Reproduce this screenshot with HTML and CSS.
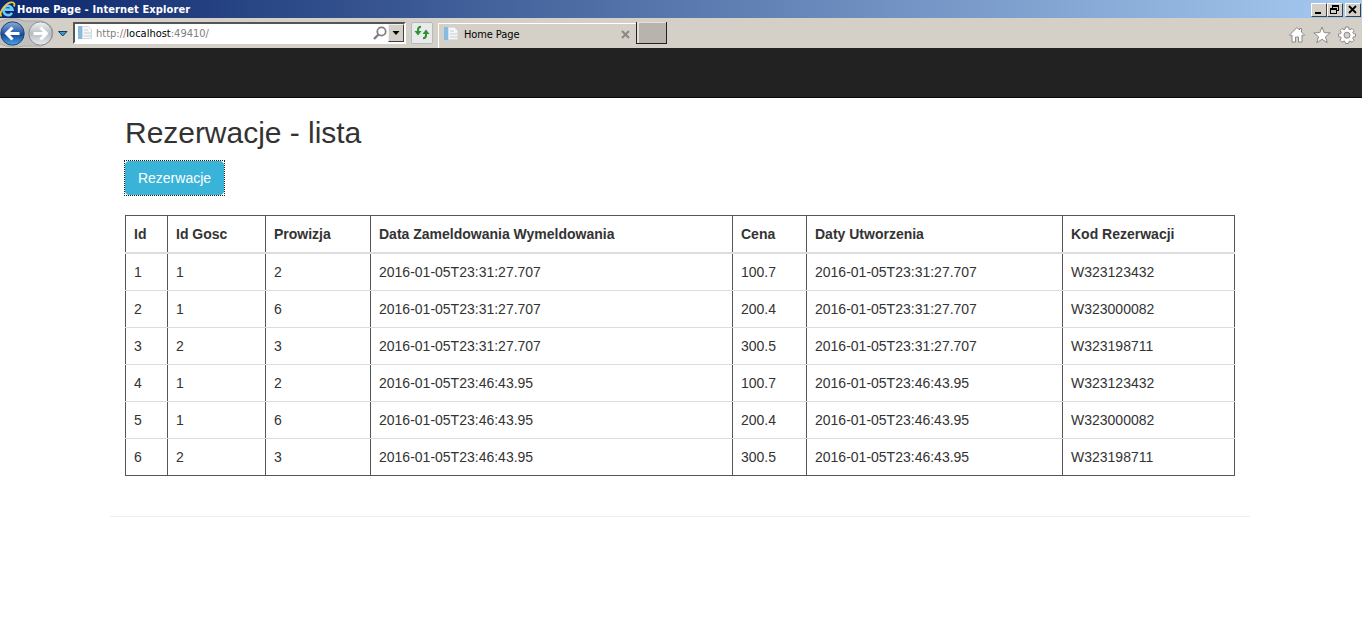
FILE: index.html
```html
<!DOCTYPE html>
<html lang="pl">
<head>
<meta charset="utf-8">
<title>Home Page</title>
<link rel="stylesheet" href="styles.css">
</head>
<body>
<header class="titlebar">
  <svg class="ie" width="16" height="17" viewBox="0 0 16 17"><path d="M12 11.800A4.600 4.600 0 1 1 12.500 8.600H4.500" fill="none" stroke="#6ccbf8" stroke-width="2.600"/><path d="M1.500 15.500C-2 11 7 0 13 1.500c2 .7 1.700 2.300.8 4" fill="none" stroke="#f7ca35" stroke-width="1.700"/></svg>
  <span class="title">Home Page - Internet Explorer</span>
  <div class="controls">
    <span class="control"><svg width="14" height="12"><path d="M3 9h6" stroke="#000" stroke-width="2"/></svg></span>
    <span class="control"><svg width="14" height="12" shape-rendering="crispEdges"><path d="M4 1h7v2H4zM10 3h1v4H9V6h1zM4 3h1v1H4zM2 4h7v2H2zM2 6h1v4H2zM8 6h1v4H8zM3 9h5v1H3z"/></svg></span>
    <span class="control close"><svg width="14" height="12"><path d="M3 2l7 7M10 2L3 9" stroke="#000" stroke-width="1.800"/></svg></span>
  </div>
</header>
<div class="toolbar">
  <svg class="nav" width="72" height="30" viewBox="0 0 72 30">
    <defs>
      <linearGradient id="blue" x2="0" y2="1"><stop stop-color="#8aabd8"/><stop offset=".45" stop-color="#2c60ae"/><stop offset=".55" stop-color="#164a9c"/><stop offset="1" stop-color="#4ba7ea"/></linearGradient>
      <linearGradient id="gray" x2="0" y2="1"><stop stop-color="#f2f3f5"/><stop offset=".5" stop-color="#b9bdc2"/><stop offset="1" stop-color="#e9ecef"/></linearGradient>
    </defs>
    <path d="M0 3.500Q12-2 24 3h17q12 3 12 12t-12 13H24Q12 31 0 26" fill="#c2c0bd" stroke="#aaa7a3"/>
    <circle cx="12.500" cy="15.500" r="11.700" fill="url(#blue)" stroke="#24446f"/>
    <circle cx="40.500" cy="15.500" r="11.700" fill="url(#gray)" stroke="#8b9097"/>
    <path d="M19.500 15.500H7M12.500 9.500l-6 6 6 6" fill="none" stroke="#fff" stroke-width="3"/>
    <path d="M33.500 15.500H46M40.500 9.500l6 6-6 6" fill="none" stroke="#fff" stroke-width="3"/>
    <path d="M58.500 13.500h8.500l-4.250 4.500z" fill="#36a0cf" stroke="#123e62"/>
  </svg>
  <div class="address">
    <svg class="page" width="16" height="16"><path d="M1 1h4v13H1z" fill="#84bbdf"/><path d="M5.500 1.500h6l3 3v9h-9z" fill="#f6f7f8" stroke="#d4d9df"/><path d="M7 5h4M7 8h7M7 11h7" stroke="#c4ccd5"/></svg>
    <span class="url">http://<b>localhost</b>:49410/</span>
    <svg class="search" width="14" height="16"><circle cx="8.500" cy="6.500" r="4.200" fill="none" stroke="#808080" stroke-width="1.800"/><path d="M5.500 9.500L1 14" stroke="#808080" stroke-width="2.400"/></svg>
    <span class="drop"><svg width="14" height="16"><path d="M3.500 6h7L7 10z"/></svg></span>
  </div>
  <span class="refresh"><svg width="20" height="20"><path d="M9 3.800Q6 4 6 7v2M11 15.200q3 0 3-3V10" fill="none" stroke="#2d9230" stroke-width="2"/><path d="M2.500 8h7L6 12.500zM10.500 11h7L14 6.500z" fill="#2d9230"/></svg></span>
  <div class="tab">
    <svg class="page" width="16" height="16"><path d="M1 1h4v13H1z" fill="#84bbdf"/><path d="M5.500 1.500h6l3 3v9h-9z" fill="#f6f7f8" stroke="#d9dee3"/><path d="M7 5h4M7 8h7M7 11h7" stroke="#c4ccd5"/></svg>
    <span class="tab-name">Home Page</span>
    <svg class="tab-close" width="9" height="9"><path d="M1 1l7 7M8 1L1 8" stroke="#8b8985" stroke-width="2"/></svg>
  </div>
  <span class="newtab"></span>
  <div class="tools">
    <svg width="18" height="18"><path d="M1.500 9L9 1.500 11.500 4V2.500h2V6l3 3-1 1-1.500-1v7h-3.500v-5h-3v5H4V9l-1.500 1z" fill="#fff" stroke="#8c8a87"/></svg>
    <svg width="18" height="18"><path d="M9 1l2.200 5.600 6 .3-4.700 3.800 1.700 6L9 13.300l-5.200 3.400 1.700-6L.8 6.900l6-.3z" fill="#fff" stroke="#8c8a87"/></svg>
    <svg width="18" height="18"><path d="M7.500 1h3l.5 2.200 1 .5 2-1.200 2 2-1.200 2 .5 1 2.200.5v2.500l-2.200.5-.5 1.200 1.200 2-2 2-2-1.200-1 .5-.5 2h-3l-.5-2-1-.5-2 1.200-2-2 1.200-2-.5-1.200L.5 10.500V8l2.200-.5.5-1-1.200-2 2-2 2 1.200 1-.5z" fill="#fff" stroke="#8c8a87"/><circle cx="9" cy="9.200" r="3" fill="#d4d0c8" stroke="#8c8a87"/></svg>
  </div>
</div>
<nav class="navbar"></nav>
<main class="content">
  <h2>Rezerwacje - lista</h2>
  <button class="btn">Rezerwacje</button>
  <table class="table">
    <colgroup><col class="c1"><col class="c2"><col class="c3"><col class="c4"><col class="c5"><col class="c6"><col class="c7"></colgroup>
    <thead><tr><th>Id</th><th>Id Gosc</th><th>Prowizja</th><th>Data Zameldowania Wymeldowania</th><th>Cena</th><th>Daty Utworzenia</th><th>Kod Rezerwacji</th></tr></thead>
    <tbody>
      <tr><td>1</td><td>1</td><td>2</td><td>2016-01-05T23:31:27.707</td><td>100.7</td><td>2016-01-05T23:31:27.707</td><td>W323123432</td></tr>
      <tr><td>2</td><td>1</td><td>6</td><td>2016-01-05T23:31:27.707</td><td>200.4</td><td>2016-01-05T23:31:27.707</td><td>W323000082</td></tr>
      <tr><td>3</td><td>2</td><td>3</td><td>2016-01-05T23:31:27.707</td><td>300.5</td><td>2016-01-05T23:31:27.707</td><td>W323198711</td></tr>
      <tr><td>4</td><td>1</td><td>2</td><td>2016-01-05T23:46:43.95</td><td>100.7</td><td>2016-01-05T23:46:43.95</td><td>W323123432</td></tr>
      <tr><td>5</td><td>1</td><td>6</td><td>2016-01-05T23:46:43.95</td><td>200.4</td><td>2016-01-05T23:46:43.95</td><td>W323000082</td></tr>
      <tr><td>6</td><td>2</td><td>3</td><td>2016-01-05T23:46:43.95</td><td>300.5</td><td>2016-01-05T23:46:43.95</td><td>W323198711</td></tr>
    </tbody>
  </table>
</main>
<hr class="rule">
</body>
</html>
```

FILE: styles.css
```css
* { box-sizing: border-box; }
body { margin: 0; background: #fff; color: #333; font: 14px/20px "Liberation Sans", Arial, sans-serif; overflow: hidden; }
svg { display: block; flex: none; }
.titlebar { height: 18px; display: flex; align-items: center; background: linear-gradient(90deg, #0c276c, #a6caf0); color: #fff; }
.title { margin-left: 1px; font: bold 11px/17px "DejaVu Sans Condensed", "DejaVu Sans", sans-serif; font-stretch: condensed; letter-spacing: .12px; white-space: nowrap; }
.controls { margin-left: auto; display: flex; padding: 1px 1px 0 0; }
.control { width: 16px; height: 14px; background: #d4d0c8; border: 1px solid; border-color: #fff #404040 #404040 #fff; }
.close { margin-left: 2px; }
.toolbar { height: 30px; background: #d4d0c8; display: flex; align-items: flex-start; font: 11px/18px "DejaVu Sans Condensed", "DejaVu Sans", sans-serif; font-stretch: condensed; }
.address { width: 333px; height: 22px; margin: 4px 0 0 1px; background: #fff; display: flex; align-items: center; border: 2px solid; border-color: #555 #fff #fff #555; }
.page { margin-left: 2px; }
.url { margin-left: 3px; padding-top: 2px; color: #808080; }
.url b { font-weight: normal; color: #000; }
.search { margin-left: auto; }
.drop { width: 16px; height: 18px; margin-left: 1px; background: #d4d0c8; border: 1px solid; border-color: #eee #404040 #404040 #eee; }
.refresh { width: 22px; height: 22px; margin: 4px 0 0 5px; background: #e9eaec; border: 1px solid #b4b8bf; border-radius: 2px; }
.tab { width: 198px; height: 25px; margin: 5px 0 0 5px; display: flex; align-items: center; padding-bottom: 4px; border-top: 1px solid #fff; border-left: 1px solid #fff; color: #000; }
.tab .page { margin-left: 4px; }
.tab-name { margin-left: 5px; padding-top: 1px; letter-spacing: -.1px; }
.tab-close { margin: 1px 6px 0 auto; }
.newtab { width: 31px; height: 22px; margin-top: 4px; background: #b8b4ad; border: solid #222; border-width: 0 1px 1px 1px; box-shadow: inset 2px 1px #e4e1db; }
.tools { display: flex; gap: 7px; margin: 8px 6px 0 auto; }
.navbar { height: 50px; background: #222; border-bottom: 1px solid #080808; }
.content { width: 1110px; margin-left: 125px; padding-top: 18px; }
h2 { margin: 0 0 12px; font-size: 30px; line-height: 33px; font-weight: normal; letter-spacing: -.03px; }
.btn { display: block; width: 99px; height: 34px; padding: 0; color: #fff; background: #39b3d7; border: 1px solid #39b3d7; border-radius: 4px; font: 14px/20px "Liberation Sans", Arial, sans-serif; position: relative; }
.btn::after { content: ""; position: absolute; inset: -2px; border: 1px dotted #222; }
.table { width: 1110px; margin-top: 20px; table-layout: fixed; border-collapse: separate; border-spacing: 0; }
.c1 { width: 43px; }
.c2 { width: 98px; }
.c3 { width: 105px; }
.c4 { width: 362px; }
.c5 { width: 74px; }
.c6 { width: 256px; }
.c7 { width: 172px; }
th, td { height: 37px; padding: 8px; text-align: left; vertical-align: top; border-bottom: 1px solid #ddd; box-shadow: inset -1px 0 #555; }
th { height: 39px; border-top: 1px solid #555; border-bottom: 2px solid #ddd; }
th:first-child, td:first-child { padding-left: 9px; box-shadow: inset -1px 0 #555, inset 1px 0 #555; }
tbody tr:last-child td { border-bottom-color: #555; }
.rule { width: 1140px; height: 1px; margin: 40px 0 0 110px; border: 0; background: #eee; }
```
